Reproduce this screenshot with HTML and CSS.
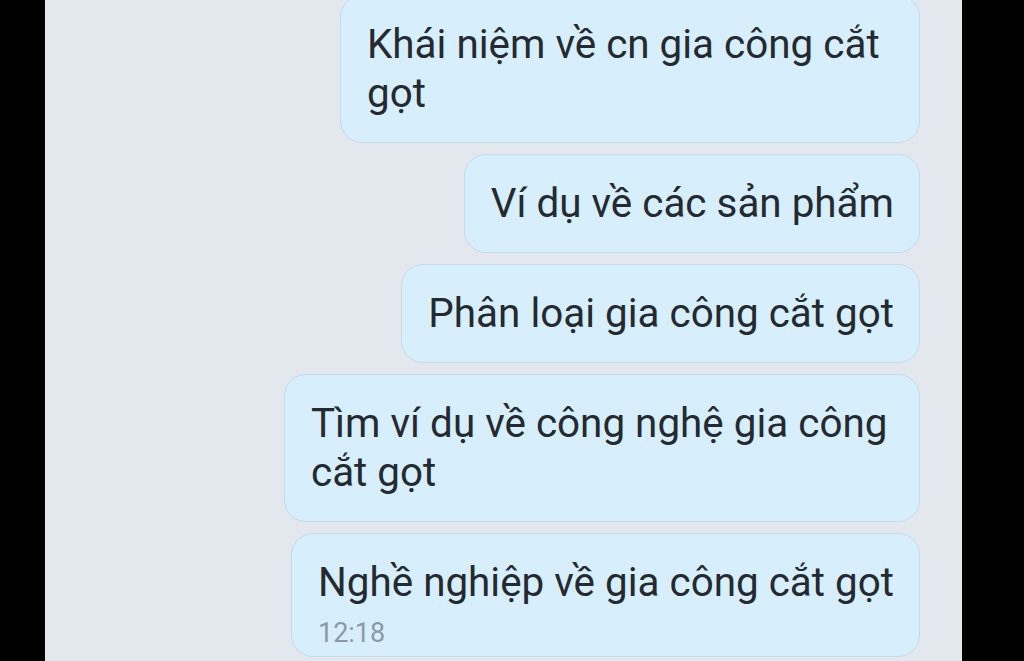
FILE: index.html
```html
<!DOCTYPE html>
<html lang="vi">
<head>
  <meta charset="UTF-8">
  <title>Chat</title>
  <link rel="stylesheet" href="styles.css">
</head>
<body>
  <div class="screen">
    <div class="chat">
      <div class="bubble first wrap-1">Khái niệm về cn gia công cắt<br>gọt</div>
      <div class="bubble">Ví dụ về các sản phẩm</div>
      <div class="bubble">Phân loại gia công cắt gọt</div>
      <div class="bubble wrap-2">Tìm ví dụ về công nghệ gia công<br>cắt gọt</div>
      <div class="bubble last">
        Nghề nghiệp về gia công cắt gọt
        <div class="time">12:18</div>
      </div>
    </div>
  </div>
</body>
</html>
```

FILE: styles.css
```css
/* Base */
* { box-sizing: border-box; }
body {
  margin: 0;
  background: #000;
  font-family: Roboto, "Noto Sans", sans-serif;
  overflow: hidden;
}
/* Phone screen area */
.screen {
  margin-left: 45px;
  width: 917px;
  height: 661px;
  background: #e3e8ef;
  overflow: hidden;
}
.chat {
  display: flex;
  flex-direction: column;
  align-items: flex-end;
  gap: 11px;
  padding-right: 42px;
  margin-top: -5px;
}
/* Message bubbles */
.bubble {
  background: #d7effc;
  border: 1px solid #c6dae8;
  border-radius: 22px;
  padding: 24px 25px 24px 26px;
  color: #242a30;
  font-size: 40.4px;
  line-height: 49px;
  white-space: nowrap;
}
.bubble.wrap-1 { width: 580px; }
.bubble.wrap-2 { width: 636px; }
.bubble.last { padding-bottom: 5px; }
.time {
  font-size: 27px;
  line-height: 36px;
  color: #8b9aa6;
  margin-top: 8px;
}
```
